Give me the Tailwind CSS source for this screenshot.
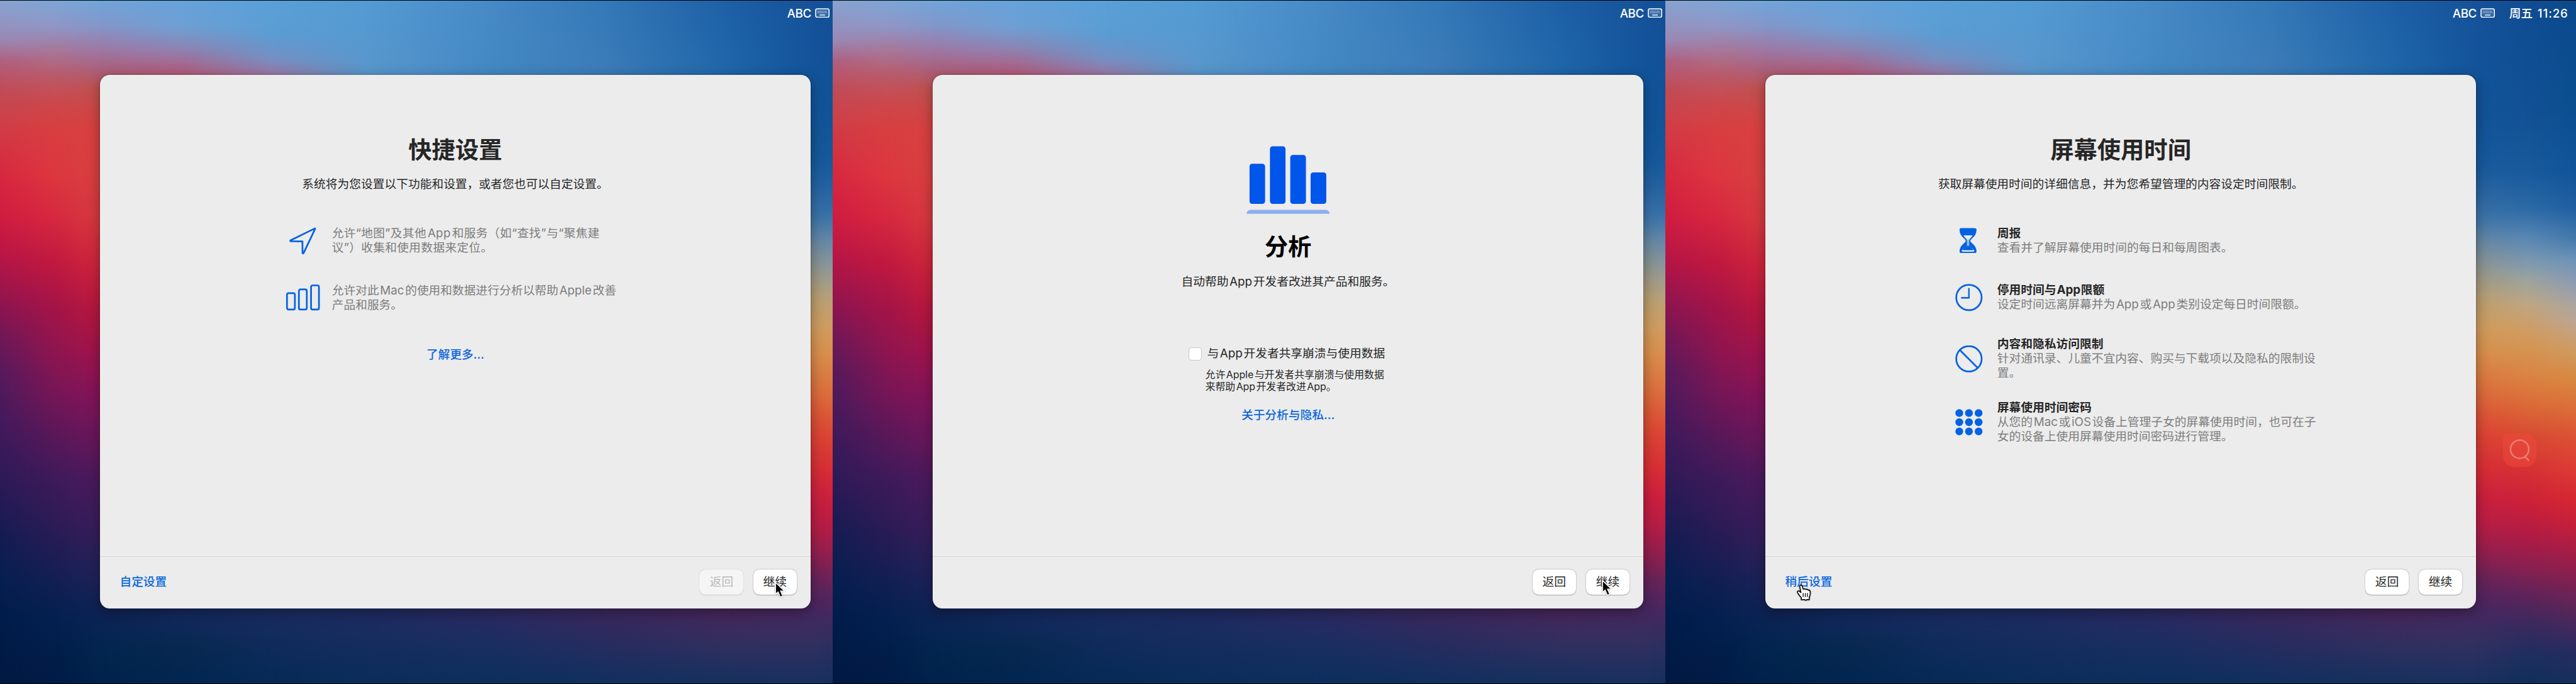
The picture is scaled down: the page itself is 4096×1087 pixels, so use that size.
<!DOCTYPE html>
<html lang="zh-CN">
<head>
<meta charset="utf-8">
<title>设置助理</title>
<script src="https://cdn.jsdelivr.net/npm/@tailwindcss/browser@4"></script>
</head>
<body class="w-[4096px] h-[1087px] overflow-hidden bg-black">
<div class="[zoom:0.966494] flex w-[4238px] h-[1125px] overflow-hidden font-['Inter','Noto_Sans_CJK_SC',sans-serif] text-[19.4px] leading-[23.5px] text-[#262626] whitespace-nowrap [word-spacing:-3.7px]">

  <!-- 快捷设置 -->
  <section class="relative isolate w-[1370px] h-full shrink-0 overflow-hidden border-t-2 border-black">
    <div data-wallpaper class="absolute -top-[2px] left-0 w-[1498px] h-[1125px] -z-10"></div>
    <header class="h-[122px] flex items-start pt-[8px] pl-[1295px] text-white font-medium text-[19.4px]">
      <span class="w-[46px] leading-[26px] tracking-[-0.4px]">ABC</span>
      <svg class="mt-[4px] w-[24px] h-[16px]" viewBox="0 0 24 16"><rect x="1" y="1" width="22" height="14" rx="2.5" fill="#ffffff22" stroke="#fff" stroke-width="1.6"/><path d="M4 5h16M4 7.5h16" stroke="#ffffff88" stroke-width="1.6" stroke-dasharray="1.6 .7"/><path d="M7.5 11.2h9" stroke="#ffffffcc" stroke-width="1.8"/></svg>
    </header>
    <main class="ml-[164px] w-[1170px] h-[877px] rounded-[16px] bg-[#ececec] shadow-[0_0_2px_rgba(0,0,0,0.55),0_6px_22px_rgba(0,0,0,0.35)] flex flex-col">
      <div class="grow flex flex-col">
        <h1 class="mt-[96px] h-[56px] leading-[56px] text-center text-[38.6px] font-bold">快捷设置</h1>
        <p class="mt-[16px] h-[24px] leading-[24px] text-center">系统将为您设置以下功能和设置，或者您也可以自定设置。</p>
        <div class="mt-[58px] pl-[306px] flex flex-col gap-[47px] text-[#7d7d7d]">
          <div class="flex items-center gap-[19px] h-[47px]">
            <svg class="w-[57px] h-[47px]" viewBox="0 0 57 47" fill="none" stroke="#0262e3" stroke-width="2.8" stroke-linejoin="round"><path d="M48 3.2 8.2 22.8Q7.2 23.8 8.6 24.2L27.8 24.4 28 43.6Q28.8 45.2 29.8 43.6L48.6 4Q48.8 2.8 48 3.2Z"/></svg>
            <p class="tracking-[0.3px]">允许“地图”及其他 App 和服务（如“查找”与“聚焦建<br>议”）收集和使用数据来定位。</p>
          </div>
          <div class="flex items-center gap-[19px] h-[47px]">
            <svg class="w-[57px] h-[47px]" viewBox="0 0 57 47" fill="none" stroke="#0262e3" stroke-width="2.8"><rect x="2.4" y="15.4" width="13" height="27" rx="2.6"/><rect x="22" y="9.2" width="13" height="33.2" rx="2.6"/><rect x="42" y="2.6" width="13" height="39.8" rx="2.6"/></svg>
            <p>允许对此 Mac 的使用和数据进行分析以帮助 Apple 改善<br>产品和服务。</p>
          </div>
        </div>
        <a class="mt-[57px] h-[24px] leading-[24px] text-center text-[#0b67dd] font-medium">了解更多...</a>
      </div>
      <footer class="h-[85px] border-t-2 border-[#d9d9d9] flex items-start pt-[20px] pl-[33px] pr-[23px] gap-[16px]">
        <a class="grow leading-[42px] text-[#0b67dd] font-medium">自定设置</a>
        <button class="w-[72px] h-[42px] rounded-[10px] bg-[#f5f5f5] text-[#b9b9b9] shadow-[0_0_2px_rgba(0,0,0,0.15),0_1px_1px_rgba(0,0,0,0.1)]">返回</button>
        <button class="w-[72px] h-[42px] rounded-[10px] bg-white shadow-[0_0_2px_rgba(0,0,0,0.2),0_1px_2px_rgba(0,0,0,0.25)]">继续</button>
      </footer>
    </main>
    <svg class="absolute left-[1275px] top-[955px] w-[18px] h-[28px] drop-shadow-[0_1px_1px_rgba(0,0,0,0.4)]" viewBox="0 0 18 28"><path d="M1.2 1.5V21l4.2-3.8 3.7 8.6 3.9-1.7-3.6-8.3 6.2-.3z" fill="#000" stroke="#fff" stroke-width="1.5"/></svg>
  </section>

  <!-- 分析 -->
  <section class="relative isolate w-[1370px] h-full shrink-0 overflow-hidden border-t-2 border-black">
    <div data-wallpaper class="absolute -top-[2px] left-0 w-[1498px] h-[1125px] -z-10"></div>
    <header class="h-[122px] flex items-start pt-[8px] pl-[1295px] text-white font-medium text-[19.4px]">
      <span class="w-[46px] leading-[26px] tracking-[-0.4px]">ABC</span>
      <svg class="mt-[4px] w-[24px] h-[16px]" viewBox="0 0 24 16"><rect x="1" y="1" width="22" height="14" rx="2.5" fill="#ffffff22" stroke="#fff" stroke-width="1.6"/><path d="M4 5h16M4 7.5h16" stroke="#ffffff88" stroke-width="1.6" stroke-dasharray="1.6 .7"/><path d="M7.5 11.2h9" stroke="#ffffffcc" stroke-width="1.8"/></svg>
    </header>
    <main class="ml-[164px] w-[1170px] h-[877px] rounded-[16px] bg-[#ececec] shadow-[0_0_2px_rgba(0,0,0,0.55),0_6px_22px_rgba(0,0,0,0.35)] flex flex-col">
      <div class="grow flex flex-col">
        <svg class="mt-[117px] w-[137px] h-[112px] self-center" viewBox="0 0 137 112" fill="#0055ea"><rect x="5" y="29.2" width="25.6" height="66" rx="4.5"/><rect x="38.6" y=".4" width="25.6" height="94.8" rx="4.5"/><rect x="72" y="14.8" width="25.8" height="80.4" rx="4.5"/><rect x="105.5" y="43.4" width="25.8" height="51.8" rx="4.5"/><path d="M0 111.5q1-6.5 7-6.5h123q6 0 7 6.5z" fill="#8eafee"/></svg>
        <h1 class="mt-[27px] h-[56px] leading-[56px] text-center text-[38.6px] font-bold text-black">分析</h1>
        <p class="mt-[16px] h-[24px] leading-[24px] text-center">自动帮助 App 开发者改进其产品和服务。</p>
        <div class="mt-[95px] pl-[422px] h-[24px] flex items-center">
          <span class="w-[21px] h-[21px] rounded-[5px] bg-white border border-[#c6c6c6] mr-[9px]"></span>
          <span>与 App 开发者共享崩溃与使用数据</span>
        </div>
        <p class="mt-[12px] ml-[449px] text-[16.4px] leading-[20.5px] [word-spacing:-3px]">允许 Apple 与开发者共享崩溃与使用数据<br>来帮助 App 开发者改进 App。</p>
        <a class="mt-[24px] h-[24px] leading-[24px] text-center text-[#0b67dd] font-medium">关于分析与隐私...</a>
      </div>
      <footer class="h-[85px] border-t-2 border-[#d9d9d9] flex items-start justify-end pt-[20px] pr-[23px] gap-[16px]">
        <button class="w-[72px] h-[42px] rounded-[10px] bg-white shadow-[0_0_2px_rgba(0,0,0,0.2),0_1px_2px_rgba(0,0,0,0.25)]">返回</button>
        <button class="w-[72px] h-[42px] rounded-[10px] bg-white shadow-[0_0_2px_rgba(0,0,0,0.2),0_1px_2px_rgba(0,0,0,0.25)]">继续</button>
      </footer>
    </main>
    <svg class="absolute left-[1265px] top-[952px] w-[18px] h-[28px] drop-shadow-[0_1px_1px_rgba(0,0,0,0.4)]" viewBox="0 0 18 28"><path d="M1.2 1.5V21l4.2-3.8 3.7 8.6 3.9-1.7-3.6-8.3 6.2-.3z" fill="#000" stroke="#fff" stroke-width="1.5"/></svg>
  </section>

  <!-- 屏幕使用时间 -->
  <section class="relative isolate w-[1498px] h-full shrink-0 overflow-hidden border-t-2 border-black">
    <div data-wallpaper class="absolute -top-[2px] left-0 w-[1498px] h-[1125px] -z-10"></div>
    <header class="h-[122px] flex items-start pt-[8px] pl-[1295px] text-white font-medium text-[19.4px]">
      <span class="w-[46px] leading-[26px] tracking-[-0.4px]">ABC</span>
      <svg class="mt-[4px] w-[24px] h-[16px]" viewBox="0 0 24 16"><rect x="1" y="1" width="22" height="14" rx="2.5" fill="#ffffff22" stroke="#fff" stroke-width="1.6"/><path d="M4 5h16M4 7.5h16" stroke="#ffffff88" stroke-width="1.6" stroke-dasharray="1.6 .7"/><path d="M7.5 11.2h9" stroke="#ffffffcc" stroke-width="1.8"/></svg>
      <span class="ml-[23px] leading-[26px]">周五</span><span class="ml-[8px] leading-[26px] tracking-[0.9px]">11:26</span>
    </header>
    <main class="ml-[164px] w-[1170px] h-[877px] rounded-[16px] bg-[#ececec] shadow-[0_0_2px_rgba(0,0,0,0.55),0_6px_22px_rgba(0,0,0,0.35)] flex flex-col">
      <div class="grow flex flex-col">
        <h1 class="mt-[96px] h-[56px] leading-[56px] text-center text-[38.6px] font-bold">屏幕使用时间</h1>
        <p class="mt-[16px] h-[24px] leading-[24px] text-center">获取屏幕使用时间的详细信息，并为您希望管理的内容设定时间限制。</p>
        <div class="mt-[58px] pl-[313px] flex flex-col text-[#7d7d7d]">
          <div class="flex items-center gap-[24px] h-[47px]">
            <svg class="w-[45px] h-[45px]" viewBox="0 0 45 45"><path d="M9.5 1.5h21q4.500 0 4.500 2.500 0 9-7.500 14.500-2.800 2.200-2.800 4t2.800 4Q35 32 35 40q0 2.500-3 2.500H10q-3 0-3-2.500 0-8 7.500-13.500 2.800-2.200 2.800-4t-2.800-4Q7 13 7 4q0-2.500 2.500-2.500z" fill="#0262e3"/><path d="M13.500 13.500h15q-1.500 3-3.700 4.600-2.200 1.800-2.200 4.400v8q4 3.500 8.400 7.500 1 2-1 2H12q-2 0-1-2 4.400-4 8.400-7.500v-8q0-2.600-2.200-4.400-2.200-1.600-3.700-4.600z" fill="#ececec"/><path d="M21 20v15M19.600 31q-3.600 1.500-7 6.500h16.800q-3.400-5-7-6.500z" fill="#0262e3" stroke="#0262e3" stroke-width=".8"/><path d="M12 38.300h18v2H12z" fill="#ececec"/></svg>
            <p><b class="font-bold text-[#262626]">周报</b><br>查看并了解屏幕使用时间的每日和每周图表。</p>
          </div>
          <div class="mt-[46px] flex items-center gap-[24px] h-[47px]">
            <svg class="w-[45px] h-[45px]" viewBox="0 0 45 45" fill="none" stroke="#0262e3"><circle cx="22.500" cy="22.500" r="20.900" stroke-width="2.800"/><path d="M22.500 8v15H10.500" stroke-width="2.400" stroke-linecap="round"/></svg>
            <p><b class="font-bold text-[#262626]">停用时间与 App 限额</b><br>设定时间远离屏幕并为 App 或 App 类别设定每日时间限额。</p>
          </div>
          <div class="mt-[42px] flex items-center gap-[24px] h-[70.5px]">
            <svg class="w-[45px] h-[45px]" viewBox="0 0 45 45" fill="none" stroke="#0262e3" stroke-width="2.800"><circle cx="22.500" cy="22" r="20.900"/><path d="M8 8l29 29"/></svg>
            <p><b class="font-bold text-[#262626]">内容和隐私访问限制</b><br>针对通讯录、儿童不宜内容、购买与下载项以及隐私的限制设<br>置。</p>
          </div>
          <div class="mt-[34px] flex items-center gap-[24px] h-[70.5px]">
            <svg class="w-[45px] h-[45px]" viewBox="0 0 45 45" fill="#0262e3"><circle cx="6.600" cy="6.600" r="6.400"/><circle cx="22.500" cy="6.600" r="6.400"/><circle cx="38.400" cy="6.600" r="6.400"/><circle cx="6.600" cy="21.700" r="6.400"/><circle cx="22.500" cy="21.700" r="6.400"/><circle cx="38.400" cy="21.700" r="6.400"/><circle cx="6.600" cy="36.800" r="6.400"/><circle cx="22.500" cy="36.800" r="6.400"/><circle cx="38.400" cy="36.800" r="6.400"/></svg>
            <p><b class="font-bold text-[#262626]">屏幕使用时间密码</b><br>从您的 Mac 或 iOS 设备上管理子女的屏幕使用时间，也可在子<br>女的设备上使用屏幕使用时间密码进行管理。</p>
          </div>
        </div>
      </div>
      <footer class="h-[85px] border-t-2 border-[#d9d9d9] flex items-start pt-[20px] pl-[33px] pr-[23px] gap-[16px]">
        <a class="grow leading-[42px] text-[#0b67dd] font-medium">稍后设置</a>
        <button class="w-[72px] h-[42px] rounded-[10px] bg-white shadow-[0_0_2px_rgba(0,0,0,0.2),0_1px_2px_rgba(0,0,0,0.25)]">返回</button>
        <button class="w-[72px] h-[42px] rounded-[10px] bg-white shadow-[0_0_2px_rgba(0,0,0,0.2),0_1px_2px_rgba(0,0,0,0.25)]">继续</button>
      </footer>
    </main>
    <svg class="absolute left-[216px] top-[960px] w-[24px] h-[27px] drop-shadow-[0_1px_1px_rgba(0,0,0,0.4)]" viewBox="0 0 24 27"><path d="M7.500 25v-3.500Q4 18 1.500 13.500q-1-2.500 1-3 2-.3 4.300 2.700L5 4q-.5-3 1.500-3.200Q8.500.8 9.200 3.500l1.300 4q2.500-1.200 4 .5 2.500-1 3.800 1 3-.5 3.800 2.500.6 5-1.600 9.500V25l-3.500-.5-2 1.500-2.500-1.500z" fill="#fff" stroke="#000" stroke-width="1.600" stroke-linejoin="round"/><path d="M10.500 14v6.500M14 14v6.500M17.500 14v6.500" stroke="#000" stroke-width="1.300"/></svg>
    <div class="absolute left-[1378px] top-[712px] w-[55px] h-[55px] rounded-[18px] rounded-tl-[3px] bg-[#f04a3c]/50 flex items-center justify-center">
      <svg class="w-[34px] h-[36px]" viewBox="0 0 34 36" fill="none" stroke="#f0948a" stroke-opacity=".7" stroke-width="2.600" stroke-linecap="round"><circle cx="17" cy="16.500" r="15"/><path d="M26.500 29.500l5 5"/></svg>
    </div>
  </section>
</div>

<script>
// Wallpaper colours: one vertical gradient per x position, cross-faded horizontally.
const columns = [
  [0,    '#87a5d2 0, #9a88b4 6%, #b06080 9%, #c04c58 13%, #cf3f48 18%, #d7283f 25.5%, #cf1c40 32%, #b31548 38.5%, #8c1550 45%, #6c1858 50%, #561a5c 54.5%, #451a5c 61%, #351a5a 67%, #281a56 72%, #141c52 78.5%, #061f50 85%, #001c4a 91%, #001a42 100%'],
  [90,   '#7ba6d8 0, #9196c6 4%, #a77798 7.5%, #b85b6b 11%, #cb484c 15%, #d83e40 19%, #dc3740 25.500%, #d62840 32%, #c0193f 38.500%, #a41448 45%, #90154f 51%, #771656 57.500%, #581858 64%, #3f1a5a 70%, #2e1b56 76.500%, #121f52 85%, #03204f 91%, #001b45 100%'],
  [164,  '#70a6da 0, #8495c8 4%, #9b7ba8 7%, #a96280 10%, #c0504f 13%, #d94040 19%, #d84040 25.500%, #d63a3f 32%, #d0263c 38.500%, #b9183d 45%, #a3144a 51%, #87135a 57.500%, #6a175b 64%, #4c1a5c 70%, #3a1d5a 76.500%, #24225a 83%, #0f2355 89%, #02254f 95.500%, #00224a 100%'],
  [300,  '#64a3da 0, #6f9fd4 4%, #8b86b5 7%, #a5688f 9.500%, #b55a78 11%, #803060 50%, #152a60 89%, #07284f 95%, #012652 100%'],
  [450,  '#5aa0d8 0, #5a9dd3 5%, #7390c4 8.500%, #9a7aa8 11%, #603060 50%, #1a2c62 89%, #062a55 100%'],
  [600,  '#539bd4 0, #5a97cc 11%, #405080 50%, #202c63 89%, #0a2d5a 100%'],
  [800,  '#478ac6 0, #4489c4 11%, #405080 50%, #2d2a62 89%, #1b2e62 94%, #0c2f5d 100%'],
  [1000, '#3378b8 0, #3c7cb8 11%, #405080 50%, #3d285e 89%, #10305f 100%'],
  [1200, '#1d5fa5 0, #1f67aa 11%, #605060 50%, #4a265c 89%, #30305f 94.500%, #15305e 100%'],
  [1334, '#16529a 0, #12549a 13%, #13559a 19%, #185a9d 24%, #2763a2 27.500%, #3f74a8 32%, #6a88a0 35.500%, #93968c 39.500%, #b79d70 43.500%, #cf9c5c 48%, #d98c4a 52%, #db6b3c 57.500%, #dc5537 60.500%, #dc4134 64%, #d62c37 69%, #c81f40 73%, #b81e46 76.500%, #8a2050 81.500%, #62245a 85%, #472760 89%, #33305f 94%, #183060 100%'],
  [1420, '#104c92 0, #115094 16%, #185b9c 25.500%, #2c6aa5 30.600%, #5a88b5 35%, #7d98b0 38.300%, #9aa49f 41%, #bfa683 44.600%, #d09c62 48.500%, #d49552 51%, #db8142 55.500%, #db6a38 59.300%, #d84a33 63.800%, #d53035 69%, #cd2138 73.300%, #b01b45 78.400%, #8a2050 83%, #5c245a 87.400%, #3c295e 91.200%, #1f2e60 95.700%, #102f5a 100%'],
  [1498, '#0b498c 0, #0a4f90 16%, #12549a 25.500%, #2060a2 30.600%, #4579ab 35%, #6e94b8 38.300%, #8f9bb3 41.500%, #aaa4a0 44.600%, #bda592 47.200%, #cd9c64 51%, #d8883f 55.500%, #da723a 59.300%, #dc5235 63.800%, #dd3a35 69%, #d42832 73.300%, #c8203a 76.500%, #a01d48 81.600%, #782253 86%, #48295c 91.200%, #252c60 95.700%, #15305c 100%']
];
document.querySelectorAll('[data-wallpaper]').forEach(w => {
  columns.forEach(([x, stops], i) => {
    const d = document.createElement('div');
    const from = i ? columns[i - 1][0] : 0;
    d.className = 'absolute inset-y-0 right-0';
    d.style.left = from + 'px';
    d.style.background = `linear-gradient(180deg, ${stops})`;
    if (i) d.style.maskImage = `linear-gradient(90deg, transparent 0, #000 ${x - from}px)`;
    w.appendChild(d);
  });
});
</script>
</body>
</html>
